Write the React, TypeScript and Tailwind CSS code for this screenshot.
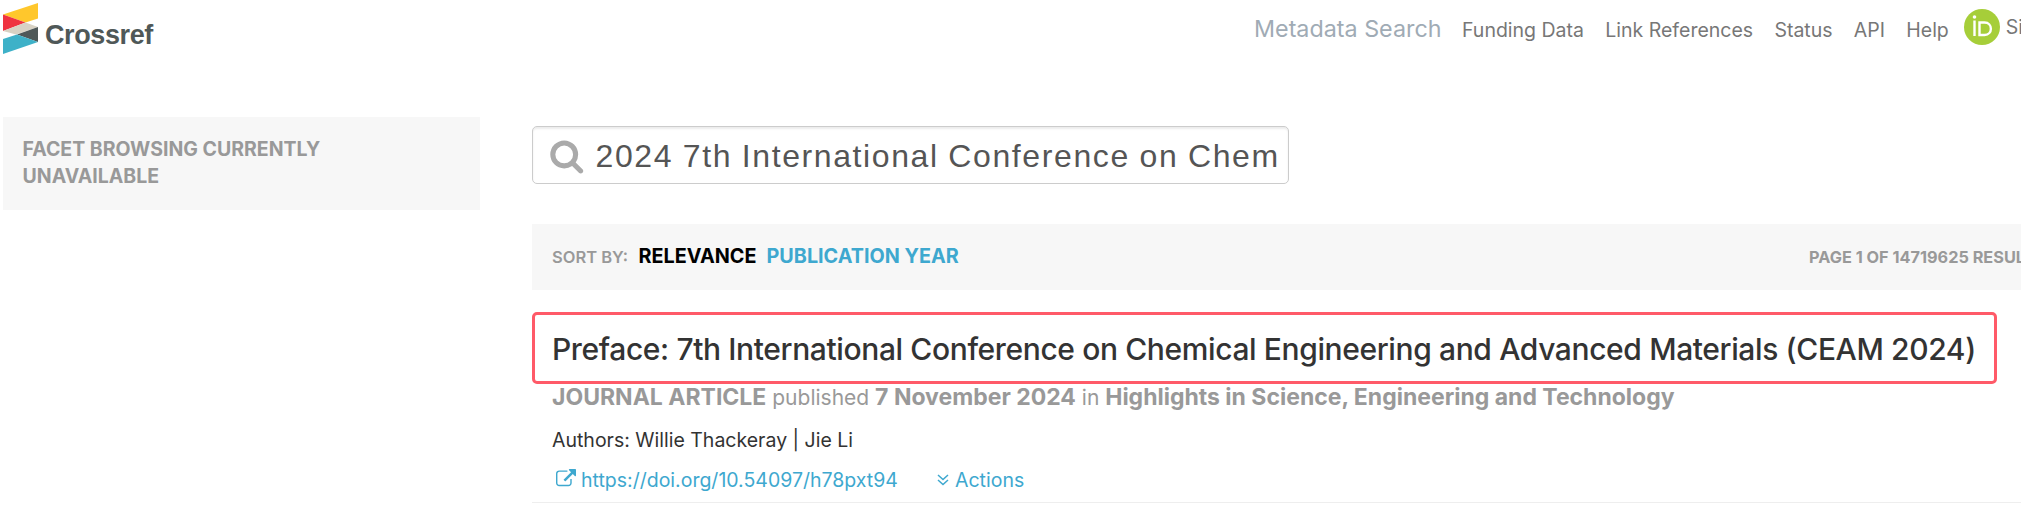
const NAV = ['Funding Data', 'Link References', 'Status', 'API', 'Help']

function CrossrefLogo() {
  return (
    <svg className="block w-[35px] h-[54px]" viewBox="0 0 35 54">
      <path d="M0 14.500 35 3v15.500L22.500 22.500z" fill="#ffc72c" />
      <path d="M0 14.500 22.500 22.500 0 31z" fill="#ef3340" />
      <path d="M0 31 22.500 22.500 35 27 13 34.500z" fill="#d8d2c4" />
      <path d="M14 34.500 35 27V42z" fill="#4f5858" />
      <path d="M0 39 14 34.500 35 42 0 54z" fill="#3eb1c8" />
    </svg>
  )
}

function OrcidIcon() {
  return (
    <svg className="block w-9 h-9 shrink-0" viewBox="0 0 36 36">
      <circle cx="18" cy="18" r="18" fill="#a6ce39" />
      <circle cx="10.500" cy="8" r="1.800" fill="#fff" />
      <path d="M10.500 11.500v15.500M15.500 13.500h5c8.500 0 8.500 12.500 0 12.500h-5z" fill="none" stroke="#fff" strokeWidth="2.400" />
    </svg>
  )
}

function SearchIcon() {
  return (
    <svg className="block w-[35.500px] h-[35.500px] shrink-0" viewBox="0 0 1792 1792" fill="#aaa">
      <path d="M1216 832q0-185-131.500-316.500t-316.500-131.500-316.500 131.500-131.500 316.500 131.500 316.500 316.500 131.500 316.500-131.500 131.500-316.500zm512 832q0 52-38 90t-90 38q-54 0-90-38l-343-342q-179 124-399 124-143 0-273.500-55.500t-225-150-150-225-55.500-273.500 55.500-273.500 150-225 225-150 273.500-55.500 273.500 55.500 225 150 150 225 55.500 273.500q0 220-124 399l343 343q37 37 37 90z" />
    </svg>
  )
}

function ExternalLinkIcon() {
  return (
    <svg className="block w-[20px] h-[20px] mt-[3px] shrink-0" viewBox="0 0 1792 1792" fill="currentColor">
      <path d="M1408 928v320q0 119-84.500 203.500t-203.500 84.500h-832q-119 0-203.500-84.500t-84.500-203.500v-832q0-119 84.500-203.500t203.500-84.500h704q14 0 23 9t9 23v64q0 14-9 23t-23 9h-704q-66 0-113 47t-47 113v832q0 66 47 113t113 47h832q66 0 113-47t47-113v-320q0-14 9-23t23-9h64q14 0 23 9t9 23zm384-864v512q0 26-19 45t-45 19-45-19l-176-176-652 652q-10 10-23 10t-23-10l-114-114q-10-10-10-23t10-23l652-652-176-176q-19-19-19-45t19-45 45-19h512q26 0 45 19t19 45z" />
    </svg>
  )
}

function AnglesDownIcon() {
  return (
    <svg className="block w-[12px] h-[12px] mt-[8px] shrink-0" viewBox="0 0 12 12" fill="none" stroke="currentColor" strokeWidth="1.500">
      <path d="m1 1 5 4.500L11 1M1 6l5 4.500L11 6" />
    </svg>
  )
}

export default function App() {
  return (
    <div className="w-full h-[510px] overflow-hidden bg-white whitespace-nowrap font-['Inter',sans-serif]">
      {/* Top bar */}
      <header className="flex justify-between h-[117px]">
        <div className="flex pl-[3px]">
          <CrossrefLogo />
          <span className="ml-[7px] mt-[17px] text-[27px] leading-9 font-bold tracking-[-0.400px] text-[#4f5858] font-['Liberation_Sans',sans-serif]">
            Crossref
          </span>
        </div>
        <nav className="flex w-[767px] shrink-0 text-[19.500px] leading-[30px] text-[#777]">
          <a className="w-[208px] shrink-0 mt-[14px] text-[23.300px] text-[#a0abb5]">Metadata Search</a>
          <div className="flex gap-[21.300px] mt-[15px]">
            {NAV.map((item) => (
              <a key={item}>{item}</a>
            ))}
          </div>
          <div className="flex ml-[15px] mt-[9px]">
            <OrcidIcon />
            <a className="ml-[6px] mt-[3px]">Sign in</a>
          </div>
        </nav>
      </header>

      <div className="flex">
        {/* Facets */}
        <aside className="w-[477px] h-[93px] shrink-0 ml-[3px] px-[19.500px] pt-[19px] bg-[#f7f7f7] text-[19.500px] leading-[27px] font-bold text-[#999]">
          FACET BROWSING CURRENTLY
          <br />
          UNAVAILABLE
        </aside>

        <main className="w-[1489px] shrink-0 ml-[52px] pt-[9px]">
          <div className="flex w-[757px] h-[58px] pl-[16px] pt-[11px] rounded-[5px] border border-[#ccc] shadow-[inset_0_2px_2px_rgba(0,0,0,0.075)] overflow-hidden">
            <SearchIcon />
            <span className="ml-[11px] leading-[36px] text-[32px] tracking-[1.600px] [word-spacing:-0.800px] text-[#555] font-['Liberation_Sans',sans-serif]">
              2024 7th International Conference on Chem
            </span>
          </div>

          {/* Sort bar */}
          <div className="flex justify-between h-[66px] mt-10 pl-5 pt-[17px] bg-[#f7f7f7] font-bold leading-[30px] text-[#999]">
            <div className="flex text-[19.800px]">
              <span className="text-[16.500px] mt-[1px] font-semibold w-[86.500px]">SORT BY:</span>
              <span className="text-black w-[128px]">RELEVANCE</span>
              <a className="text-[#3ea8cf]">PUBLICATION YEAR</a>
            </div>
            <span className="w-[212px] mt-[1px] text-[16.300px]">PAGE 1 OF 14719625 RESULTS</span>
          </div>

          {/* Result */}
          <article className="mt-[22px] h-[191px] border-b border-[#eee]">
            <h2 className="w-[1465px] h-[72px] pl-[17px] pt-[16px] rounded-[5px] border-[3px] border-[#ff5a68] text-[30px] leading-9 font-medium tracking-[-0.380px] text-[#333]">
              Preface: 7th International Conference on Chemical Engineering and Advanced Materials (CEAM 2024)
            </h2>
            <div className="pl-5">
              <p className="-mt-px text-[21px] leading-7 text-[#999]">
                <b className="text-[23px]">JOURNAL ARTICLE</b> published <b className="text-[23px]">7 November 2024</b> in{' '}
                <b className="text-[23px]">Highlights in Science, Engineering and Technology</b>
              </p>
              <p className="mt-[14px] text-[19.500px] leading-7 text-[#333]">Authors: Willie Thackeray | Jie Li</p>
              <div className="flex mt-[12px] text-[19.500px] leading-7 text-[#3ea8cf]">
                <div className="flex w-[385px] pl-[4px]">
                  <ExternalLinkIcon />
                  <a className="ml-[5px]">https://doi.org/10.54097/h78pxt94</a>
                </div>
                <div className="flex">
                  <AnglesDownIcon />
                  <a className="ml-[6px]">Actions</a>
                </div>
              </div>
            </div>
          </article>
        </main>
      </div>
    </div>
  )
}
